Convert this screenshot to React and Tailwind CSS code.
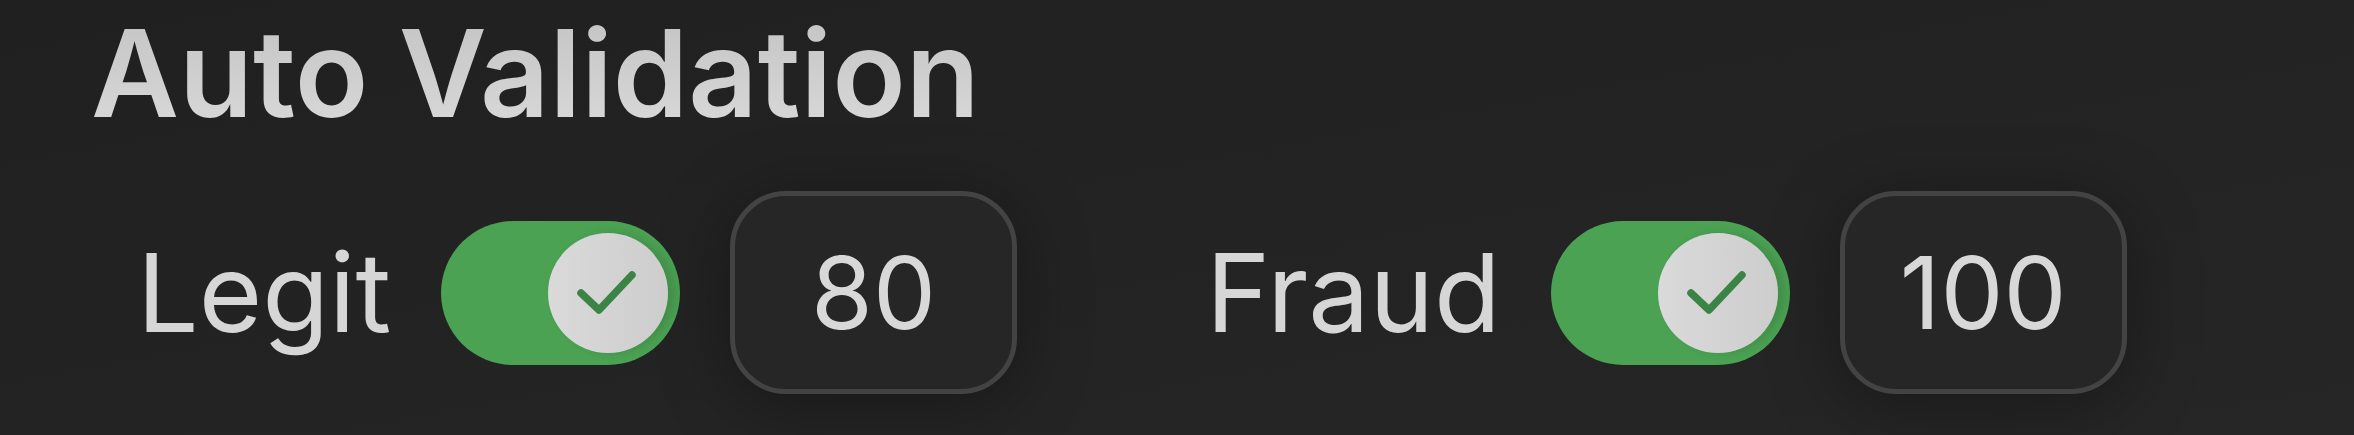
import { useState } from 'react';

function Toggle({ on, onChange }) {
  return (
    <button
      onClick={() => onChange(!on)}
      className={`flex items-center w-[239px] h-[144px] rounded-full p-[12px] ${on ? 'justify-end bg-[#4ba253]' : 'justify-start bg-[#444]'}`}
    >
      <span className="relative w-[120px] h-[120px] rounded-full bg-gradient-to-r from-[#dadada] to-[#cdcdcd] shadow-[6px_0_8px_rgba(0,0,0,0.12)]">
        {on && (
          <svg className="absolute inset-0" width="120" height="120" viewBox="0 0 120 120" fill="none">
            <path d="M33 60 L51 77 L84 42" stroke="#3b8445" strokeWidth="7.5" strokeLinecap="round" strokeLinejoin="round" />
          </svg>
        )}
      </span>
    </button>
  );
}

function Setting({ label, value }) {
  const [on, setOn] = useState(true);
  const [val, setVal] = useState(value);

  return (
    <div className="flex items-center gap-[50px]">
      <span className="text-[109px] leading-none text-[#d6d6d6]">{label}</span>
      <Toggle on={on} onChange={setOn} />
      <input
        value={val}
        onChange={(e) => setVal(e.target.value)}
        className="w-[287px] h-[203px] rounded-[56px] border-[5px] border-[#434343] bg-[#262626] text-center text-[100px] text-[#d8d8d8] outline-none shadow-[0_10px_70px_rgba(0,0,0,0.35)]"
      />
    </div>
  );
}

export default function App() {
  return (
    <main className="w-[2354px] h-[435px] overflow-hidden bg-gradient-to-br from-[#202020] to-[#262626] font-['Inter',sans-serif]">
      <h1 className="pl-[91px] pt-[13px] text-[121px] leading-[121px] font-semibold bg-gradient-to-b from-[#c2c2c2] to-[#d9d9d9] bg-clip-text text-transparent w-fit pr-[4px]">
        Auto Validation
      </h1>
      <div className="flex items-center gap-[189px] pl-[137px] mt-[57px]">
        <Setting label="Legit" value="80" />
        <Setting label="Fraud" value="100" />
      </div>
    </main>
  );
}
